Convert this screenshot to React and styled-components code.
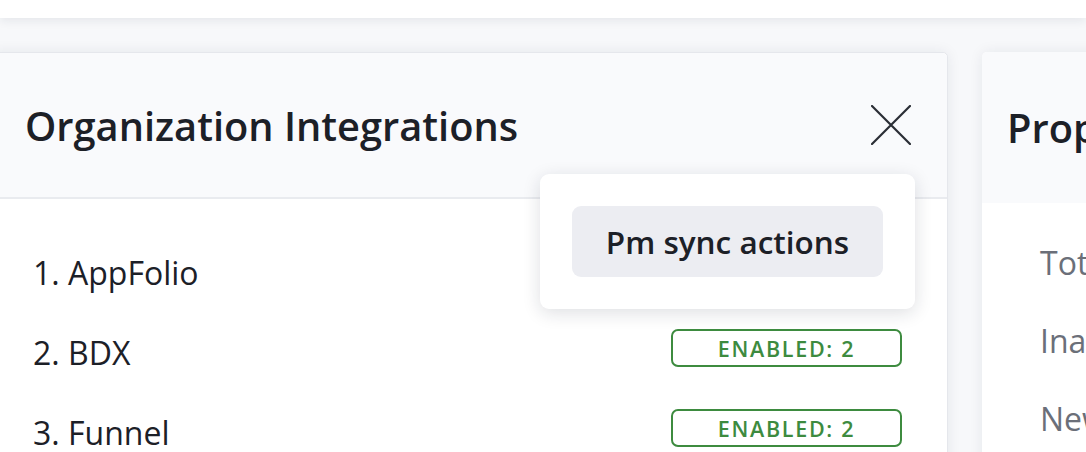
import React from 'react';
import styled, { createGlobalStyle } from 'styled-components';

const GlobalStyle = createGlobalStyle`
  html, body {
    margin: 0;
    padding: 0;
    background: #f7f8fa;
    font-family: "Open Sans", "Noto Sans", sans-serif;
    overflow: hidden;
  }
  * { box-sizing: border-box; }
`;

const TopBar = styled.div`
  height: 18px;
  background: #ffffff;
  box-shadow: 0 3px 10px rgba(30, 40, 60, 0.08);
  position: relative;
  z-index: 2;
`;

const Page = styled.div`
  display: flex;
  align-items: flex-start;
  gap: 34px;
  padding-top: 34px;
  margin-left: -10px;
  height: 434px;
`;

const Card = styled.div`
  position: relative;
  flex: 0 0 ${p => p.width}px;
  height: 420px;
  background: #ffffff;
  border: ${p => (p.bordered ? '1px solid #e5e7ec' : 'none')};
  border-radius: 5px;
  box-shadow: 0 0 14px rgba(30, 40, 60, 0.08);
`;

const CardHeader = styled.div`
  height: ${p => p.height}px;
  display: flex;
  align-items: center;
  justify-content: space-between;
  padding: 0 36px 0 ${p => p.padLeft}px;
  background: #f9fafc;
  border-bottom: ${p => (p.bordered ? '2px solid #e9ebef' : 'none')};
  border-radius: 5px 5px 0 0;
`;

const Title = styled.h1`
  margin: 0;
  font-size: 39.8px;
  font-weight: 600;
  color: #1c2027;
  white-space: nowrap;
`;

const CloseButton = styled.button`
  width: 40px;
  height: 40px;
  padding: 0;
  border: none;
  background: transparent;
  display: flex;
  align-items: center;
  justify-content: center;
  cursor: pointer;
`;

const List = styled.ul`
  list-style: none;
  margin: 0;
  padding: ${p => p.padTop}px 45px 0 ${p => p.padLeft}px;
`;

const Row = styled.li`
  height: ${p => p.rowHeight}px;
  display: flex;
  align-items: center;
  justify-content: space-between;
  font-size: 32px;
  color: ${p => p.color};
  white-space: nowrap;
`;

const Badge = styled.span`
  width: 231px;
  height: 38px;
  margin-bottom: 8px;
  display: flex;
  align-items: center;
  justify-content: center;
  border: 2px solid #3d8b3f;
  border-radius: 7px;
  color: #3d8b3f;
  font-size: 21.5px;
  font-weight: 600;
  letter-spacing: 1.7px;
`;

const Popover = styled.div`
  position: absolute;
  top: 121px;
  right: 32px;
  width: 375px;
  padding: 32px;
  background: #ffffff;
  border-radius: 9px;
  box-shadow: 0 4px 18px rgba(20, 30, 50, 0.14);
  z-index: 3;
`;

const MenuItem = styled.button`
  width: 100%;
  height: 71px;
  border: none;
  border-radius: 9px;
  background: #ecedf2;
  color: #1c2027;
  font-family: inherit;
  font-size: 31.5px;
  font-weight: 600;
  cursor: pointer;
`;

const integrations = [
  { name: '1. AppFolio', badge: null },
  { name: '2. BDX', badge: 'ENABLED: 2' },
  { name: '3. Funnel', badge: 'ENABLED: 2' },
];

const properties = ['Total', 'Inactive', 'New'];

export default function App() {
  return (
    <>
      <GlobalStyle />
      <TopBar />
      <Page>
        <Card width={958} bordered>
          <CardHeader height={146} padLeft={34} bordered>
            <Title>Organization Integrations</Title>
            <CloseButton aria-label="Close">
              <svg width="40" height="40" viewBox="0 0 40 40">
                <path d="M1 1 L39 39 M39 1 L1 39" stroke="#2a2e35" strokeWidth="2.2" strokeLinecap="round" />
              </svg>
            </CloseButton>
          </CardHeader>
          <List padTop={33} padLeft={42}>
            {integrations.map(item => (
              <Row key={item.name} rowHeight={80} color="#1c2027">
                <span>{item.name}</span>
                {item.badge && <Badge>{item.badge}</Badge>}
              </Row>
            ))}
          </List>
          <Popover>
            <MenuItem>Pm sync actions</MenuItem>
          </Popover>
        </Card>
        <Card width={320}>
          <CardHeader height={151} padLeft={25}>
            <Title>Property Statistics</Title>
          </CardHeader>
          <List padTop={20} padLeft={58}>
            {properties.map(p => (
              <Row key={p} rowHeight={78} color="#6b6f79">
                <span>{p}</span>
              </Row>
            ))}
          </List>
        </Card>
      </Page>
    </>
  );
}
